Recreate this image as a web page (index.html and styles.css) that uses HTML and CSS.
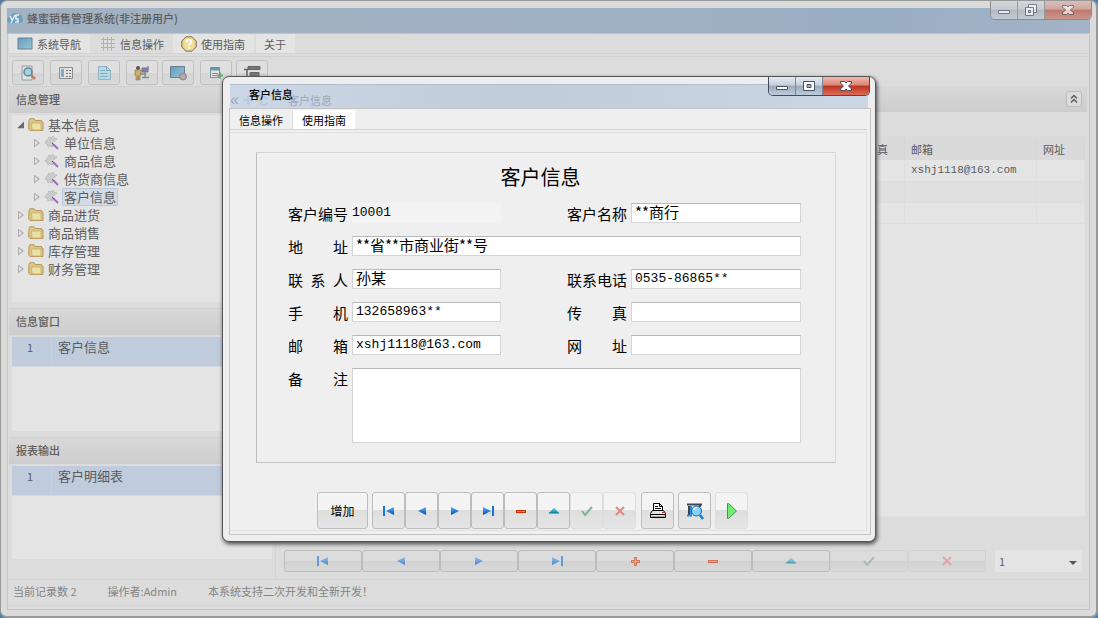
FILE: index.html
```html
<!DOCTYPE html>
<html lang="zh-CN">
<head>
<meta charset="utf-8">
<title>蜂蜜销售管理系统</title>
<link rel="stylesheet" href="styles.css">
</head>
<body>
<svg class="defs" aria-hidden="true">
  <defs>
    <linearGradient id="blue" x1="0" y1="0" x2="0" y2="1"><stop offset="0" stop-color="#5ab4ff"/><stop offset="1" stop-color="#0048c0"/></linearGradient>
    <linearGradient id="screen" x1="0" y1="0" x2="1" y2="1"><stop offset="0" stop-color="#5f9cbe"/><stop offset="1" stop-color="#9cc6da"/></linearGradient>
    <symbol id="i-first" viewBox="0 0 12 10"><path d="M0 0h2v10H0z" fill="#1a72e0"/><path d="M11 1v8L3 5z" fill="url(#blue)"/></symbol>
    <symbol id="i-prev" viewBox="0 0 12 10"><path d="M10 1v8L2 5z" fill="url(#blue)"/></symbol>
    <symbol id="i-next" viewBox="0 0 12 10"><path d="M2 1v8l8-4z" fill="url(#blue)"/></symbol>
    <symbol id="i-last" viewBox="0 0 12 10"><path d="M10 0h2v10h-2z" fill="#1a72e0"/><path d="M1 1v8l8-4z" fill="url(#blue)"/></symbol>
    <symbol id="i-plus" viewBox="0 0 12 10"><path d="M5 1h3v3h3v3H8v3H5V7H2V4h3z" fill="#d03c0c"/><path d="M6 2h1v7H6zM3 5h7v1H3z" fill="#ff8a50"/></symbol>
    <symbol id="i-minus" viewBox="0 0 12 10"><path d="M1 4h10v3H1z" fill="#d02c04"/><path d="M2 5h8v1H2z" fill="#ff8030"/></symbol>
    <symbol id="i-up" viewBox="0 0 12 10"><path d="M1 7h10L6 2z" fill="#12a4c4"/><path d="M1 7h10" stroke="#0b6f88"/><path d="M5 4h2" stroke="#5fe0f4"/></symbol>
    <symbol id="i-ok" viewBox="0 0 12 10"><path d="M1 5l3 4 7-8" fill="none" stroke="#7fb592" stroke-width="2"/></symbol>
    <symbol id="i-no" viewBox="0 0 12 10"><path d="M2 1l8 8M10 1L2 9" fill="none" stroke="#e48882" stroke-width="2"/></symbol>
    <symbol id="i-folder" viewBox="0 0 16 14"><path d="M1 2.500L2 .7h4l1.200 1.800h6.300V4H15v8.500H2L.7 11z" fill="#ddc583" stroke="#b79a5b"/><path d="M3.500 5h9.500v7H4z" fill="#e9e2a8" stroke="#c9ad6c" stroke-width=".8"/></symbol>
    <symbol id="i-wand" viewBox="0 0 14 14"><path d="M1 5l2-2 1-2 2 1 2-2 1 2 3 1-2 2-2 1-1 2 1 3-3-1-2 1-1-3-2-1z" fill="#cbcbcb" stroke="#b4b4b4" stroke-dasharray="2 1"/><path d="M8 8l5 5" stroke="#a26bc0" stroke-width="2"/><path d="M7 7l2 2" stroke="#666" stroke-width="1"/></symbol>
    <symbol id="i-min" viewBox="0 0 14 12"><path d="M1.500 6.500h11v3h-11z" fill="#fff" stroke="#4a5468"/></symbol>
    <symbol id="i-max" viewBox="0 0 14 12"><path d="M1.500 1.500h11v9h-11z" fill="#fff" stroke="#4a5468"/><path d="M5 4.500h4v3H5z" fill="#a9b8cc" stroke="#4a5468"/></symbol>
    <symbol id="i-restore" viewBox="0 0 14 12"><path d="M4.500.5h8v8h-8z" fill="#fff" stroke="#4a5468"/><path d="M1.500 3.500h8v8h-8z" fill="#fff" stroke="#4a5468"/><path d="M4.500 6.500h2v2h-2z" fill="#a9b8cc" stroke="#4a5468"/></symbol>
    <symbol id="i-close" viewBox="0 0 14 12"><path d="M1.500 1.500h4L7 3l1.500-1.500h4V3L9.500 6l3 3v1.500h-4L7 9l-1.500 1.500h-4V9l3-3-3-3z" fill="#fff" stroke="#4c4c5a"/></symbol>
    <symbol id="i-desk" viewBox="0 0 16 14"><path d="M1 1h14v11H1z" fill="url(#screen)" stroke="#6f7f88"/></symbol>
  </defs>
</svg>

<main class="window app">
  <header class="titlebar">
    <svg class="logo" viewBox="0 0 17 14"><path d="M3 12a3 3 0 0 1 0-6 5 5 0 0 1 8-3 4 4 0 0 1 4 4 3 3 0 0 1-1 5z" fill="#6b9fbe"/><path d="M3 5l2 4M8 4L4 12M12 4H9v4h2v3H8" fill="none" stroke="#e8eef2" stroke-width="1.500"/></svg>
    <h1>蜂蜜销售管理系统(非注册用户)</h1>
  </header>
  <div class="controls dim">
    <button aria-label="最小化"><svg><use href="#i-min"/></svg></button>
    <button aria-label="还原"><svg><use href="#i-restore"/></svg></button>
    <button class="close" aria-label="关闭"><svg><use href="#i-close"/></svg></button>
  </div>

  <div class="frame">
    <nav class="menu">
      <button class="lit"><svg class="mi"><use href="#i-desk"/></svg>系统导航</button>
      <button><svg class="mi" viewBox="0 0 16 16"><path d="M3.500 1v14M7.500 1v14M11.500 1v14M1 3.500h14M1 7.500h14M1 11.500h14" stroke="#b2b2b2"/></svg>信息操作</button>
      <button class="lit"><svg class="mi" viewBox="0 0 16 16"><path d="M5 .8h6L15.200 5v6L11 15.200H5L.8 11V5z" fill="#e9d583" stroke="#8c6860"/><circle cx="8" cy="8" r="5.500" fill="#f0e09a"/><path d="M5.800 6c0-3 4.600-3 4.600-.3C10.400 7.500 8 7.500 8 9.500M8 11v2" fill="none" stroke="#fff" stroke-width="1.800"/></svg>使用指南</button>
      <button class="lit">关于</button>
    </nav>
    <div class="toolbar">
      <div class="group">
        <button aria-label="查询"><svg viewBox="0 0 18 16"><path d="M3 1h10v14H3z" fill="#dfe3e4" stroke="#9a9a9a"/><circle cx="9" cy="7" r="4" fill="#9fd3e0" stroke="#5f8391" stroke-width="1.500"/><path d="M12 10l4 4" stroke="#c47f62" stroke-width="2.500"/></svg></button>
        <button aria-label="列表"><svg viewBox="0 0 18 16"><path d="M2.500 2.500h13v11h-13z" fill="#e2e2e2" stroke="#8d8d8d"/><path d="M4 4h3v8H4z" fill="#7faec6"/><path d="M9 5.500h2m1 0h2M9 8.500h2m1 0h2M9 11.500h2m1 0h2" stroke="#777"/></svg></button>
        <button aria-label="文档"><svg viewBox="0 0 18 16"><path d="M3.500 1.500h8l4 4v9h-12z" fill="#b8dbe8" stroke="#8fb3c4"/><path d="M11.500 1.500v4h4M5 5.500h5M5 8.500h8M5 11.500h8" fill="none" stroke="#83a9bc"/></svg></button>
        <button aria-label="人员"><svg viewBox="0 0 18 16"><circle cx="5" cy="3" r="2" fill="#555"/><path d="M2 5h6v5H7v5H5.500v-4H5v4H3v-5H2z" fill="#cdb06c" stroke="#977a49" stroke-width=".7"/><path d="M9 3h6v4H9z" fill="#7680c0" stroke="#777"/><path d="M7 9h6M9 12.500h7M12 7v5M15 1v4" stroke="#8a8a8a" stroke-width="1.500"/></svg></button>
      </div>
      <div class="group">
        <button aria-label="网络"><svg viewBox="0 0 18 16"><path d="M1.500 1.500h14v11h-14z" fill="url(#screen)" stroke="#6f7f88"/><circle cx="14" cy="11.500" r="3.500" fill="#b69aca" stroke="#808b72"/><path d="M12 10.500l3 3" stroke="#b7bd67" stroke-width="2"/></svg></button>
        <button aria-label="导入"><svg viewBox="0 0 18 16"><path d="M3.500 2.500h9v10h-9z" fill="#e4e4e4" stroke="#7d8d95"/><path d="M3 4h10" stroke="#6695ae" stroke-width="3"/><path d="M5 8.500h6M5 10.500h6" stroke="#888"/><path d="M10 10.500h6M13 7.500v6" stroke="#6aa67b" stroke-width="2"/></svg></button>
      </div>
      <div class="group">
        <button aria-label="层级"><svg viewBox="0 0 18 16"><path d="M5 1.500h12v3H5zM7 7.500h9v4H7z" fill="#777" stroke="#666"/><path d="M1 4.500h4M4 4v8M2 12h8" stroke="#666" stroke-width="1.500"/></svg></button>
      </div>
    </div>

    <div class="work">
      <aside class="side">
        <section class="panel tall">
          <h2>信息管理</h2>
          <ul class="box tree">
            <li><i class="arrow open"></i><svg class="folder"><use href="#i-folder"/></svg><span>基本信息</span></li>
            <li class="child"><i class="arrow"></i><svg class="wand"><use href="#i-wand"/></svg><span>单位信息</span></li>
            <li class="child"><i class="arrow"></i><svg class="wand"><use href="#i-wand"/></svg><span>商品信息</span></li>
            <li class="child"><i class="arrow"></i><svg class="wand"><use href="#i-wand"/></svg><span>供货商信息</span></li>
            <li class="child"><i class="arrow"></i><svg class="wand"><use href="#i-wand"/></svg><span class="selected">客户信息</span></li>
            <li><i class="arrow"></i><svg class="folder"><use href="#i-folder"/></svg><span>商品进货</span></li>
            <li><i class="arrow"></i><svg class="folder"><use href="#i-folder"/></svg><span>商品销售</span></li>
            <li><i class="arrow"></i><svg class="folder"><use href="#i-folder"/></svg><span>库存管理</span></li>
            <li><i class="arrow"></i><svg class="folder"><use href="#i-folder"/></svg><span>财务管理</span></li>
          </ul>
        </section>
        <section class="panel">
          <h2>信息窗口</h2>
          <div class="box"><div class="entry"><b>1</b><span>客户信息</span></div></div>
        </section>
        <section class="panel">
          <h2>报表输出</h2>
          <div class="box"><div class="entry"><b>1</b><span>客户明细表</span></div></div>
        </section>
      </aside>

      <section class="content">
        <div class="bar"><button class="fold" aria-label="折叠"><svg viewBox="0 0 10 10"><path d="M2 4.500l3-3 3 3M2 8.500l3-3 3 3" fill="none" stroke="#555" stroke-width="1.300"/></svg></button></div>
        <div class="grid">
          <table>
            <colgroup><col><col class="c-fax"><col class="c-mail"><col class="c-web"></colgroup>
            <thead><tr><th></th><th>传真</th><th>邮箱</th><th>网址</th></tr></thead>
            <tbody>
              <tr><td></td><td></td><td class="mono">xshj1118@163.com</td><td></td></tr>
              <tr class="alt"><td></td><td></td><td></td><td></td></tr>
              <tr><td></td><td></td><td></td><td></td></tr>
            </tbody>
          </table>
        </div>
        <div class="pager">
          <div class="records">
            <button aria-label="首条"><svg><use href="#i-first"/></svg></button>
            <button aria-label="上一条"><svg><use href="#i-prev"/></svg></button>
            <button aria-label="下一条"><svg><use href="#i-next"/></svg></button>
            <button aria-label="末条"><svg><use href="#i-last"/></svg></button>
            <button aria-label="添加"><svg><use href="#i-plus"/></svg></button>
            <button aria-label="删除"><svg><use href="#i-minus"/></svg></button>
            <button aria-label="编辑"><svg><use href="#i-up"/></svg></button>
            <button class="off" aria-label="保存"><svg><use href="#i-ok"/></svg></button>
            <button class="off" aria-label="取消"><svg><use href="#i-no"/></svg></button>
          </div>
          <div class="pick"><select aria-label="页码"><option>1</option></select></div>
        </div>
      </section>
    </div>

    <footer class="status"><span>当前记录数 2</span><span>操作者:Admin</span><span>本系统支持二次开发和全新开发！</span></footer>
  </div>
</main>

<div class="layer">
  <div class="window dialog" role="dialog" aria-labelledby="dlg-title">
    <header class="titlebar">
      <h2 id="dlg-title">客户信息</h2>
      <div class="ghost" aria-hidden="true"><i>«</i><em>+ c</em><span>客户信息</span></div>
    </header>
    <div class="controls">
      <button aria-label="最小化"><svg><use href="#i-min"/></svg></button>
      <button aria-label="最大化"><svg><use href="#i-max"/></svg></button>
      <button class="close" aria-label="关闭"><svg><use href="#i-close"/></svg></button>
    </div>
    <div class="frame">
      <nav class="menu">
        <button>信息操作</button>
        <button class="lit">使用指南</button>
      </nav>
      <div class="page">
        <form class="card">
          <h3>客户信息</h3>
          <div class="fields">
            <div class="field"><label for="f-id">客户编号</label><input id="f-id" class="plain mono" value="10001" readonly></div>
            <div class="field"><label for="f-name">客户名称</label><input id="f-name" value="**商行"></div>
            <div class="field wide"><label for="f-addr">地 址</label><input id="f-addr" value="**省**市商业街**号"></div>
            <div class="field"><label for="f-person">联 系 人</label><input id="f-person" value="孙某"></div>
            <div class="field"><label for="f-tel">联系电话</label><input id="f-tel" class="mono" value="0535-86865**"></div>
            <div class="field"><label for="f-mobile">手 机</label><input id="f-mobile" class="mono" value="132658963**"></div>
            <div class="field"><label for="f-fax">传 真</label><input id="f-fax"></div>
            <div class="field"><label for="f-mail">邮 箱</label><input id="f-mail" class="mono" value="xshj1118@163.com"></div>
            <div class="field"><label for="f-web">网 址</label><input id="f-web"></div>
            <div class="field wide note"><label for="f-note">备 注</label><textarea id="f-note"></textarea></div>
          </div>
        </form>
        <div class="actions">
          <button class="add">增加</button>
          <div class="strip">
            <button aria-label="首条"><svg><use href="#i-first"/></svg></button>
            <button aria-label="上一条"><svg><use href="#i-prev"/></svg></button>
            <button aria-label="下一条"><svg><use href="#i-next"/></svg></button>
            <button aria-label="末条"><svg><use href="#i-last"/></svg></button>
            <button aria-label="删除"><svg><use href="#i-minus"/></svg></button>
            <button aria-label="编辑"><svg><use href="#i-up"/></svg></button>
            <button class="off" aria-label="保存"><svg><use href="#i-ok"/></svg></button>
            <button class="off" aria-label="取消"><svg><use href="#i-no"/></svg></button>
          </div>
          <button aria-label="打印"><svg class="big" viewBox="0 0 18 18"><path d="M4.500 8V1.500h6l3 3V8" fill="#fff" stroke="#000"/><path d="M10.500 1.500v3h3M6 4.500h3M6 6.500h6" fill="none" stroke="#000"/><path d="M3.500 8.500h11l2 3v4H1.500v-4z" fill="#e4e4e4" stroke="#000"/><path d="M1.500 12.500h15" stroke="#000"/><path d="M2 14.500h14" stroke="#aaa"/><path d="M13 10.500h2" stroke="#e02020"/></svg></button>
          <button aria-label="预览"><svg class="big" viewBox="0 0 18 18"><path d="M1 2.500h15M3 4v9M14 2v3" stroke="#444" stroke-width="2"/><path d="M5 4v10M1 13.500h5" stroke="#2a8ce0" stroke-width="2"/><circle cx="10.500" cy="9" r="5" fill="#84d4fa" stroke="#1560b4"/><path d="M8 8c0-2 2-3 3-2" fill="none" stroke="#fff" stroke-width="1.500"/><path d="M14 13l3 4" stroke="#1780c8" stroke-width="2.500"/></svg></button>
          <button class="off" aria-label="运行"><svg class="big" viewBox="0 0 18 18"><path d="M4.500 1.500h1L13.500 9l-8 7.500h-1z" fill="#6cf070" stroke="#55875a"/></svg></button>
        </div>
      </div>
    </div>
  </div>
</div>
</body>
</html>
```

FILE: styles.css
```css
* { box-sizing: border-box; }
body {
  margin: 0;
  background: #4f7da8;
  color: #5c5c5c;
  font: 11px/16px "Noto Sans CJK SC", sans-serif;
}
h1, h2, h3, ul { margin: 0; padding: 0; font-size: inherit; }
button, input, select, textarea { font: inherit; color: inherit; margin: 0; padding: 0; border: 0; background: none; }
button { display: flex; align-items: center; justify-content: center; }
svg { display: block; flex: none; width: 12px; height: 10px; }
.defs { position: absolute; width: 0; height: 0; }

/* window chrome */
.window { position: relative; display: flex; flex-direction: column; border: 1px solid #999; border-radius: 7px; }
.titlebar { display: flex; align-items: center; position: relative; }
.controls {
  position: absolute; top: 0; right: 5px; display: flex; overflow: hidden;
  border: 1px solid #444c58; border-top: 0; border-radius: 0 0 5px 5px;
}
.controls button {
  width: 27px; height: 18px; border-right: 1px solid #7b8797;
  background: linear-gradient(#e4eaf1, #c6d0dc 45%, #9dabbd 50%, #bdcbdc);
}
.controls .close { width: 46px; border: 0; background: linear-gradient(#efb8ae, #dc8474 45%, #bd3520 50%, #dc6a54); }
.controls svg { width: 14px; height: 12px; }
.controls.dim { right: 4px; border-color: #8b8d90; }
.controls.dim button { background: linear-gradient(#d4d7da, #c8ccd1 45%, #b2b9c1 50%, #c3cbd3); border-color: #969ba1; }
.controls.dim .close { background: linear-gradient(#d8beba, #d2a7a0 45%, #bd7a70 50%, #cc948b); }
.controls.dim svg { opacity: .65; }
.frame { display: flex; flex-direction: column; flex: 1; min-height: 0; border: 1px solid #c4c4c6; }
.menu { display: flex; height: 20px; border-bottom: 1px solid #d2d2d2; }
.menu button { gap: 4px; padding: 0 9px; }

/* main application */
.app { height: 100vh; min-height: 560px; padding: 7px 6px 6px; background: #dbdbdb; border-width: 1px 2px 2px 1px; }
.app > .titlebar { height: 25px; background: linear-gradient(100deg, #a3b2c2, #9fb0c3 60%, #9aaec4 80%, #a3b3c6); }
.app h1 { font-weight: 500; padding-left: 3px; height: 22px; }
.logo { width: 17px; height: 14px; margin-bottom: 5px; }
.app > .frame { background: #dcdcdc; padding: 0 1px 3px; }
.app .menu button { padding: 0 9px 0 8px; }
.app .menu .lit { background: #e4e4e4; margin-right: 2px; }
.mi { width: 16px; height: 16px; }
.toolbar { display: flex; gap: 4px; height: 30px; margin-top: 2px; padding: 3px 3px 0; border-top: 1px solid #d0d0d0; }
.group { display: flex; gap: 6px; }
.toolbar button { width: 32px; height: 25px; border: 1px solid #c0c0c0; border-radius: 3px; background: linear-gradient(#dfdfdf 50%, #d4d4d4 50%, #dadada); }
.toolbar svg { width: 18px; height: 16px; }
.work { display: flex; flex: 1; min-height: 0; gap: 3px; }

.side { width: 267px; display: flex; flex-direction: column; gap: 6px; padding-bottom: 20px; border-right: 1px solid #d3d3d3; }
.panel { flex: 1 1 29px; display: flex; flex-direction: column; min-height: 0; }
.panel.tall { flex-grow: 2; }
.panel h2 { height: 27px; margin-bottom: 2px; padding: 4px 7px; font-weight: 500; background: linear-gradient(#d8d8d8, #cdcdcd); border-top: 1px solid #d2d2d2; }
.box { flex: 1; min-height: 0; margin: 0 3px; background: #e4e4e4; overflow: hidden; }
.tree { list-style: none; padding: 1px 5px; font-size: 13px; line-height: 18px; }
.tree li { display: flex; align-items: center; height: 18px; }
.tree .child { padding-left: 16px; }
.tree span { padding: 0 2px; margin-left: 2px; height: 18px; }
.tree .selected { background: #d3dbe7; box-shadow: inset 0 0 0 1px #b9c8dc; border-radius: 2px; }
.arrow { width: 7px; height: 9px; margin-right: 4px; background: #adadad; clip-path: path(evenodd, "M1 0 L7 4.500 L1 9 Z M2 2 L2 7 L5 4.500 Z"); }
.arrow.open { background: #6a6a6a; clip-path: polygon(100% 10%, 100% 85%, 0 85%); }
.folder { width: 16px; height: 14px; }
.wand { width: 16px; height: 14px; }
.entry { display: flex; height: 30px; background: #c0cbdc; border-bottom: 1px solid #d4d9e1; line-height: 20px; }
.entry b { width: 40px; padding-right: 3px; text-align: center; font-weight: 400; border-right: 1px solid #c8d1df; }
.entry span { padding-left: 6px; font-size: 13px; }

.content { flex: 1; min-width: 0; display: flex; flex-direction: column; padding: 0 1px 7px 0; }
.bar { display: flex; justify-content: flex-end; align-items: center; height: 26px; padding: 0 5px; background: linear-gradient(#d8d8d8, #cdcdcd); }
.bar .fold { width: 16px; height: 16px; border: 1px solid #bdbdbd; border-radius: 3px; background: #dcdcdc; }
.fold svg { width: 10px; height: 10px; }
.grid { flex: 1; min-height: 0; margin: 25px 2px 33px 0; background: #e4e4e4; border-bottom: 1px solid #e0e0e0; }
table { width: 100%; table-layout: fixed; border-collapse: collapse; }
.c-fax { width: 45px; }
.c-mail { width: 132px; }
.c-web { width: 48px; }
th { height: 23px; padding: 0 6px; text-align: left; font-weight: 400; background: #dadada; border-right: 1px solid #d6d6d6; }
td { height: 21px; padding: 0 6px; border: 1px solid #dedede; border-width: 0 1px 1px 0; }
.alt { background: #e0e0e0; }
.mono { font-family: "Liberation Mono", "Noto Sans CJK SC", monospace; }
.pager { display: flex; gap: 9px; padding: 0 5px; }
.records { display: flex; flex: 1; }
.records button { flex: 1; height: 22px; border: 1px solid #bcbcbc; border-radius: 3px; background: linear-gradient(#dcdcdc 50%, #d2d2d2 50%, #d8d8d8); }
.records svg { opacity: .6; }
.records .off { border-color: #d2d2d2; }
.pick { position: relative; width: 87px; }
.pick select { appearance: none; width: 100%; height: 22px; padding: 0 4px; background: #e4e4e4; }
.pick::after { content: ""; position: absolute; right: 5px; top: 11px; border: 4px solid transparent; border-top-color: #555; border-bottom: 0; }
.status { display: flex; gap: 31px; height: 27px; padding: 2px 4px; color: #858585; line-height: 18px; border: 1px solid #d4d4d4; border-width: 1px 0; }

/* customer dialog */
.layer { position: fixed; inset: 0; display: grid; place-items: center; }
.dialog { width: 654px; max-width: 100%; padding: 7px 4px 6px 6px; color: #000; background: #eee; border-color: #555; box-shadow: 1px 2px 4px #444; }
.dialog > .titlebar { height: 24px; margin: 0 3px 0 1px; padding: 0 19px; background: linear-gradient(100deg, #ccd8e7, #c1cbda 45%, #c6d1df 70%, #cbd7e5); border-top: 1px solid #b0bdcf; }
.dialog h2 { height: 22px; font-weight: 500; z-index: 1; }
.ghost { position: absolute; inset: 8px auto auto 0; display: flex; align-items: center; color: #9ca8b7; height: 14px; }
.ghost i { width: 11px; font: 16px/14px "Liberation Sans", sans-serif; }
.ghost em { width: 47px; padding-left: 2px; font: bold 18px/14px "Liberation Sans", sans-serif; color: #bdc9d8; }
.dialog > .frame { background: #efefef; padding: 1px 3px 3px 0; }
.dialog .menu .lit { background: #fff; border-left: 1px solid #ddd; }
.page { margin: 2px 0 0; padding: 19px 30px 1px 26px; border: 1px solid #dfe1e1; border-left: 0; }
.card { padding: 12px 34px 19px 31px; border: 1px solid #c6c6c6; border-color: #d4d4d4 #d8d8d8 #c4c4c4 #bcbcbc; }
.card h3 { font-size: 20px; font-weight: 400; line-height: 24px; text-align: center; margin: 0 0 14px 0; padding-right: 8px; }
.fields { display: grid; grid-template-columns: 213px 234px; justify-content: space-between; row-gap: 13px; font-size: 15px; line-height: 22px; }
.field { display: flex; gap: 4px; height: 20px; }
.field label { width: 60px; text-align-last: justify; }
.field input, .field textarea { flex: 1; min-width: 0; height: 20px; padding: 0 3px 2px; background: #fff; border: 1px solid #d2d4d8; border-top-color: #b8b8b8; }
.field .mono { font-size: 13px; padding-bottom: 0; }
.field .plain { padding: 0; border: 0; background: #f3f3f3; }
.note { height: 75px; }
.field textarea { height: 75px; resize: none; }
.wide { grid-column: 1 / -1; }
.actions { display: flex; gap: 4px; padding: 29px 0 0 61px; }
.strip { display: flex; margin-right: 1px; }
.actions button { width: 33px; height: 37px; border: 1px solid #bdbdbd; border-radius: 3px; background: linear-gradient(#f4f4f4 50%, #dedede 50%, #e5e5e5); }
.actions .add { width: 51px; font-size: 12px; }
.actions .off { border-color: #dedede; }
.actions .big { width: 18px; height: 18px; }
```
